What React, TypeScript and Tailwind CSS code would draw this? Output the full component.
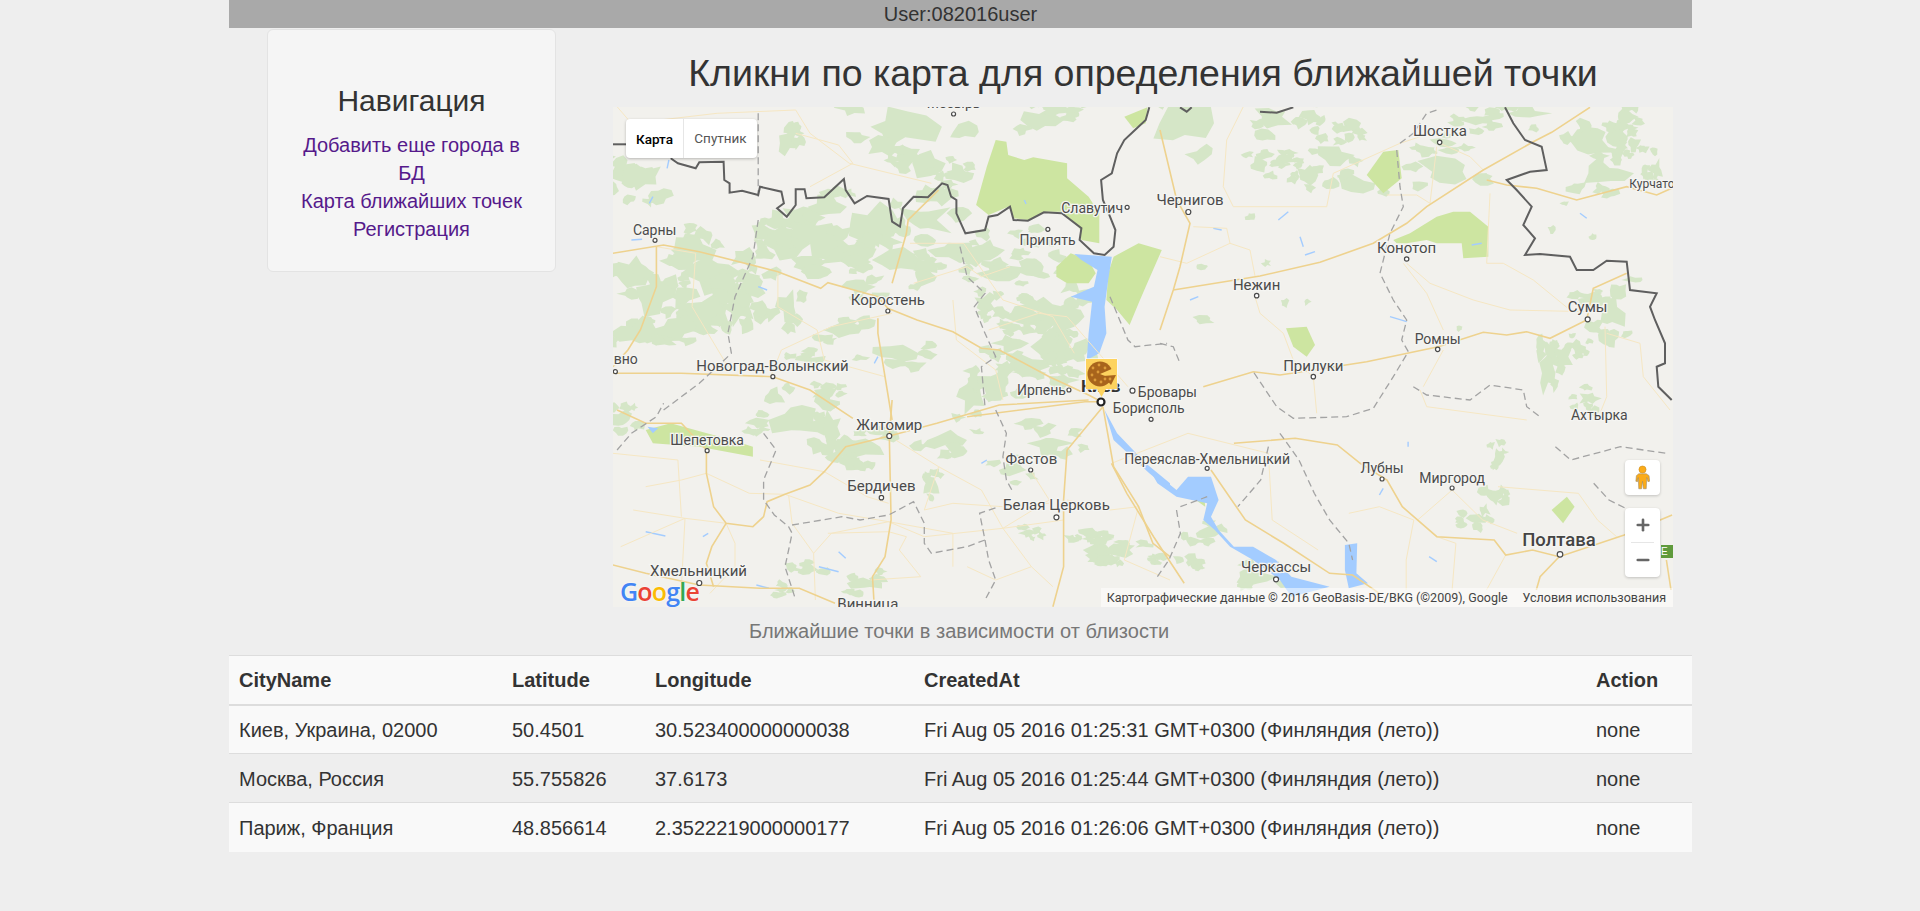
import { Plus, Minus } from "lucide-react";

type Crop = { sx: number; sy: number; ox: number; oy: number };

// map pieces were traced per region, each with its own scale to map coordinates
const A: Crop = { sx: 2.8, sy: 3, ox: -3, oy: -7 };
const B: Crop = { sx: 3, sy: 3, ox: 547, oy: -7 };
const C: Crop = { sx: 2.8, sy: 3, ox: -3, oy: 293 };
const D: Crop = { sx: 2.613, sy: 3, ox: 487, oy: 313 };

const pts = (c: Crop, p: number[]) => {
    const out: string[] = [];
    for (let i = 0; i < p.length; i += 2) {
        out.push(`${(p[i] / c.sx + c.ox).toFixed(1)},${(p[i + 1] / c.sy + c.oy).toFixed(1)}`);
    }
    return out.join(" ");
};

const rnd = (n: number) => {
    const v = Math.sin(n * 127.1 + 3.7) * 43758.5453;
    return v - Math.floor(v);
};

const blob = (c: Crop, x: number, y: number, rx: number, ry: number, seed: number) => {
    const p: number[] = [];
    const n = 10;
    for (let i = 0; i < n; i++) {
        const r = 0.4 + 0.8 * rnd(seed * 31 + i);
        const a = (i / n) * Math.PI * 2;
        p.push(x + Math.cos(a) * rx * r, y + Math.sin(a) * ry * r);
    }
    return pts(c, p);
};

// each patch gets a main shape and some broken off pieces around it
const forestShapes = (c: Crop, b: number[], seed: number) => {
    const [x, y, rx, ry] = b;
    const shapes = [blob(c, x, y, rx * 1.2, ry * 1.2, seed)];
    for (let k = 1; k <= 5; k++) {
        const a = rnd(seed + k * 7) * Math.PI * 2;
        const d = 1.1 + 0.9 * rnd(seed + k * 11);
        const s = 0.25 + 0.3 * rnd(seed + k * 13);
        shapes.push(blob(c, x + Math.cos(a) * rx * d, y + Math.sin(a) * ry * d, rx * s + 8, ry * s + 6, seed * 100 + k));
    }
    return shapes;
};

const forests: [Crop, number[][]][] = [
    [A, [[810, 80, 90, 55], [880, 190, 50, 35], [975, 220, 40, 25], [1210, 60, 50, 35], [1250, 30, 40, 20], [500, 130, 25, 30], [30, 210, 40, 30], [90, 230, 50, 40], [60, 520, 40, 50], [120, 590, 60, 50], [230, 450, 50, 40], [290, 520, 70, 60], [270, 640, 60, 50], [360, 620, 40, 50], [180, 690, 50, 30], [70, 700, 50, 40], [440, 400, 40, 30], [500, 430, 60, 40], [600, 410, 80, 50], [600, 320, 50, 30], [660, 470, 80, 30], [730, 370, 60, 50], [800, 480, 70, 40], [700, 560, 40, 25], [880, 360, 70, 50], [960, 450, 50, 30], [880, 530, 40, 25], [1050, 450, 50, 35], [1100, 520, 60, 25], [1180, 500, 50, 30], [1050, 610, 30, 25], [1150, 650, 50, 30], [1230, 640, 40, 40], [1290, 650, 50, 50], [1120, 730, 40, 25], [1240, 740, 50, 40], [1300, 760, 30, 30], [1080, 850, 60, 30], [1010, 890, 40, 40], [800, 760, 60, 25], [660, 690, 50, 20], [560, 780, 40, 15], [600, 880, 30, 15], [1170, 800, 50, 30], [1260, 840, 40, 20], [200, 590, 40, 30], [500, 620, 30, 40], [400, 560, 40, 30], [1190, 420, 35, 25]]],
    [C, [[520, 60, 60, 50], [620, 80, 30, 40], [420, 70, 30, 15], [930, 120, 60, 25], [700, 140, 60, 30], [670, 190, 30, 25], [900, 260, 20, 25], [1230, 130, 60, 35], [1130, 210, 40, 20], [1380, 450, 40, 25], [1340, 400, 30, 15], [720, 550, 40, 20], [550, 510, 30, 15], [30, 60, 30, 25], [1170, 400, 20, 15], [1410, 480, 15, 15], [480, 570, 20, 10]]],
    [B, [[60, 70, 90, 70], [340, 50, 50, 30], [455, 50, 30, 25], [580, 80, 30, 20], [525, 165, 50, 35], [440, 225, 25, 25], [590, 250, 50, 25], [300, 195, 35, 20], [380, 175, 30, 15], [850, 130, 40, 15], [960, 60, 50, 20], [860, 215, 80, 40], [1100, 40, 60, 25], [1300, 120, 50, 45], [1370, 110, 30, 25], [1340, 220, 60, 35], [1400, 50, 30, 20], [1490, 210, 20, 30], [1420, 135, 20, 20], [1210, 770, 25, 30], [1255, 740, 18, 20], [1160, 820, 25, 50], [1350, 640, 40, 50], [1290, 590, 35, 15], [1290, 895, 30, 20]]],
    [D, [[1040, 110, 15, 25], [1030, 230, 20, 30], [985, 295, 25, 20], [280, 340, 30, 20], [140, 420, 15, 8], [240, 420, 20, 15], [400, 470, 45, 25], [50, 390, 40, 18]]],
];

// single small patches, not broken up
const smallPatches: [Crop, number[][]][] = [
    [B, [[1215, 310, 15, 10], [1175, 390, 15, 15], [1300, 410, 15, 15], [270, 350, 15, 15], [130, 660, 40, 15], [440, 605, 15, 15], [375, 610, 15, 15], [130, 500, 20, 10], [320, 490, 15, 12], [1400, 700, 20, 15], [900, 685, 12, 10], [1420, 540, 30, 12]]],
];

const parks: [Crop, number[]][] = [
    [A, [1080, 120, 1110, 125, 1115, 165, 1160, 180, 1185, 172, 1280, 190, 1280, 235, 1340, 290, 1370, 340, 1370, 430, 1320, 420, 1315, 385, 1265, 335, 1215, 335, 1170, 360, 1130, 355, 1120, 318, 1060, 345, 1025, 315, 1055, 200]],
    [A, [1250, 500, 1290, 460, 1340, 480, 1360, 520, 1340, 550, 1280, 550, 1250, 530]],
    [A, [1410, 470, 1480, 430, 1545, 450, 1500, 560, 1480, 610, 1455, 675, 1420, 630, 1390, 600, 1395, 520]],
    [A, [1440, 50, 1505, 22, 1500, 70, 1465, 85]],
    [B, [620, 225, 670, 155, 715, 150, 725, 235, 670, 280]],
    [B, [700, 420, 750, 400, 830, 350, 880, 335, 930, 335, 985, 380, 985, 470, 910, 475, 905, 430, 830, 430, 800, 420, 740, 430, 710, 430]],
    [B, [378, 685, 440, 680, 465, 735, 440, 770, 400, 740]],
    [C, [100, 90, 170, 70, 340, 120, 400, 140, 400, 170, 250, 140, 120, 130]],
    [D, [240, 190, 270, 190, 275, 260, 250, 240]],
    [D, [1180, 270, 1220, 230, 1240, 260, 1210, 310]],
];

const water: [Crop, number[]][] = [
    [A, [1300, 462, 1405, 470, 1395, 540, 1385, 620, 1390, 700, 1370, 760, 1335, 780, 1340, 700, 1350, 605, 1290, 590, 1355, 560, 1365, 510, 1320, 480]],
    [C, [1385, 30, 1420, 100, 1500, 190, 1568, 250, 1568, 270, 1510, 220, 1410, 120]],
    [D, [125, 140, 200, 210, 230, 170, 290, 170, 310, 240, 290, 290, 310, 330, 350, 380, 400, 380, 460, 420, 500, 470, 600, 500, 500, 530, 470, 480, 400, 420, 340, 380, 300, 330, 270, 300, 280, 250, 200, 230, 150, 190]],
    [D, [640, 375, 672, 370, 670, 460, 700, 490, 650, 505, 640, 450]],
    [C, [105, 80, 135, 85, 120, 100]],
];

// short blue strokes for lakes and rivers
const ticks: [Crop, number[]][] = [
    [A, [60, 420, 90, 418]], [A, [120, 290, 110, 310]], [A, [165, 180, 160, 205]], [A, [415, 560, 440, 570]], [A, [750, 770, 740, 790]], [A, [1160, 300, 1165, 312]],
    [B, [355, 360, 385, 335]], [B, [420, 410, 430, 440]], [B, [435, 465, 465, 455]], [B, [160, 385, 185, 390]], [B, [90, 600, 115, 590]], [B, [690, 650, 740, 665]], [B, [935, 435, 965, 430]], [B, [1260, 340, 1280, 355]],
    [C, [100, 395, 155, 408]], [C, [640, 455, 660, 475]], [C, [585, 500, 640, 515]], [C, [260, 410, 275, 400]], [C, [410, 555, 445, 565]], [C, [1040, 190, 1055, 180]],
    [D, [740, 205, 730, 225]], [D, [860, 410, 880, 425]], [D, [805, 65, 805, 80]],
];

const roads: [Crop, number[]][] = [
    [A, [8, 460, 150, 435, 250, 455, 470, 515, 590, 565, 610, 548, 750, 590, 778, 625, 860, 660, 960, 695, 1040, 745, 1090, 750, 1230, 830, 1340, 885, 1376, 905]],
    [A, [790, 550, 830, 400, 835, 360, 920, 270]],
    [A, [130, 440, 130, 560, 85, 690, 50, 750, 8, 800]],
    [A, [8, 820, 200, 820, 456, 830, 560, 870, 680, 955]],
    [A, [750, 655, 750, 700, 790, 960]],
    [A, [1000, 950, 1330, 905, 1376, 905]],
    [C, [782, 108, 787, 360, 770, 470, 735, 530, 740, 620]],
    [C, [782, 108, 790, 0]],
    [C, [782, 108, 915, 70, 1090, 15, 1340, 0]],
    [C, [782, 108, 660, 140, 600, 215, 560, 255, 490, 283, 440, 305, 430, 350, 400, 380, 325, 370, 290, 320, 270, 220, 270, 155]],
    [C, [325, 370, 285, 440, 270, 490, 290, 560]],
    [C, [8, 495, 100, 520, 250, 555, 420, 565, 530, 565, 630, 610]],
    [C, [1380, 20, 1280, 150, 1270, 300, 1270, 500, 1240, 620]],
    [C, [1380, 20, 1410, 200, 1480, 320, 1520, 430, 1568, 470]],
    [C, [20, 30, 100, 70, 200, 70, 270, 150]],
    [B, [40, 570, 300, 528, 480, 487, 640, 430, 740, 370, 800, 320, 970, 210, 1120, 125, 1175, 97, 1290, 22]],
    [B, [0, 90, 50, 300, 90, 370, 60, 500, 40, 570, 0, 690]],
    [B, [980, 240, 1040, 255, 1130, 265, 1250, 300, 1400, 260, 1490, 285, 1535, 265]],
    [B, [130, 860, 280, 815, 360, 825, 460, 810, 620, 785, 835, 740, 970, 697, 1040, 705, 1100, 695, 1170, 715, 1280, 660, 1300, 565, 1400, 520]],
    [D, [290, 150, 380, 300, 480, 370, 600, 460, 660, 465, 730, 520]],
    [D, [350, 70, 510, 55, 620, 75, 680, 130, 750, 180, 790, 260, 880, 350, 1030, 360, 1060, 405, 1130, 390, 1200, 410, 1370, 345, 1495, 285]],
    [D, [1200, 410, 1150, 470, 1140, 510]],
    [D, [30, 130, 70, 220, 140, 350, 220, 490]],
    [D, [1480, 420, 1492, 510]],
];

const minorRoads: [Crop, number[]][] = [
    [A, [20, 20, 60, 70, 300, 40, 520, 30, 560, 100, 670, 190, 900, 250]],
    [A, [520, 100, 640, 135, 680, 190, 560, 260]],
    [A, [130, 440, 240, 460, 230, 620, 330, 800]],
    [A, [470, 515, 470, 620, 580, 690, 600, 780, 770, 830]],
    [A, [840, 430, 990, 430, 1100, 600, 1240, 650, 1300, 760]],
    [A, [790, 640, 620, 680, 480, 750, 450, 830]],
    [A, [960, 600, 970, 720, 1080, 810, 1100, 900]],
    [A, [1060, 690, 1200, 640, 1280, 650, 1450, 860]],
    [A, [850, 550, 1000, 500, 1040, 530, 1120, 500]],
    [C, [100, 260, 200, 240, 270, 220, 390, 280, 490, 283, 640, 340, 780, 365, 880, 410, 1100, 385, 1270, 360]],
    [C, [65, 330, 210, 355, 325, 370, 350, 430, 350, 500, 280, 580]],
    [C, [800, 120, 920, 200, 1040, 270, 1100, 385, 1180, 500, 1240, 560]],
    [C, [920, 200, 880, 330, 960, 310, 1100, 320, 1230, 310]],
    [C, [610, 400, 780, 395, 830, 410, 810, 450, 870, 530, 730, 540]],
    [C, [570, 460, 620, 400, 780, 365, 960, 400, 960, 500]],
    [C, [500, 285, 510, 370, 570, 460, 575, 600]],
    [C, [1180, 215, 1230, 300, 1100, 385]],
    [C, [1280, 300, 1400, 330, 1480, 320, 1440, 480, 1568, 540]],
    [C, [30, 440, 210, 355, 200, 560]],
    [C, [8, 160, 190, 180, 200, 350]],
    [C, [420, 180, 600, 215, 720, 290, 780, 310]],
    [C, [1000, 500, 1080, 540, 1180, 500]],
    [B, [250, 20, 200, 120, 190, 260, 220, 320, 500, 320, 520, 220, 720, 130, 780, 110]],
    [B, [680, 285, 770, 285, 810, 310, 830, 140]],
    [B, [840, 130, 930, 170, 970, 210]],
    [B, [100, 380, 200, 385, 210, 430, 270, 450, 285, 528]],
    [B, [0, 470, 80, 490, 210, 430]],
    [B, [285, 590, 300, 640, 370, 700, 400, 780, 460, 830, 470, 940]],
    [B, [730, 490, 800, 580, 850, 690]],
    [B, [740, 490, 810, 550, 940, 600, 1050, 630, 1283, 635]],
    [B, [990, 280, 980, 490, 1030, 490, 1120, 540, 1230, 630]],
    [B, [1335, 680, 1340, 890, 1320, 940]],
    [B, [1340, 700, 1440, 730, 1450, 830, 1530, 930]],
    [B, [780, 870, 800, 920, 1100, 960]],
    [B, [850, 750, 790, 860]],
    [D, [30, 130, 230, 40, 440, 100, 450, 300, 570, 390]],
    [D, [650, 280, 730, 260, 820, 300, 800, 420, 800, 510]],
    [D, [830, 300, 920, 210, 1000, 300, 1090, 340]],
    [D, [880, 350, 930, 370, 920, 510]],
    [D, [1060, 405, 1010, 510]],
    [D, [1040, 200, 1250, 220, 1300, 300, 1350, 350]],
];

const districts: [Crop, number[]][] = [
    [A, [415, 40, 415, 290]],
    [A, [415, 360, 400, 470, 350, 590, 330, 700, 340, 760, 250, 850, 150, 930]],
    [A, [980, 440, 1000, 530, 1050, 580, 1020, 620, 1050, 700, 1080, 770, 1040, 800, 1050, 920]],
    [A, [1400, 590, 1450, 720, 1470, 740, 1560, 730]],
    [C, [20, 150, 60, 100, 130, 50, 150, 10]],
    [C, [430, 100, 465, 150, 430, 240, 430, 300, 460, 345, 500, 380, 510, 400, 500, 450, 490, 500, 520, 600]],
    [C, [510, 375, 650, 350, 700, 360, 780, 345, 850, 305, 880, 370, 880, 430, 900, 460, 1000, 440, 1050, 420, 1035, 340, 1090, 320]],
    [C, [1050, 420, 1060, 480, 1080, 540, 1050, 600]],
    [C, [1080, 30, 1110, 100, 1100, 170, 1110, 240, 1130, 280]],
    [B, [710, 150, 720, 260, 730, 320, 690, 400, 660, 520, 700, 600, 740, 660, 725, 720, 745, 755, 700, 830, 640, 925, 560, 950, 400, 955, 350, 920, 310, 860, 280, 815]],
    [B, [760, 860, 800, 885, 930, 900, 990, 855, 1090, 870, 1100, 920, 1140, 950]],
    [B, [720, 130, 760, 100, 800, 40, 830, 30]],
    [B, [0, 730, 40, 740, 60, 790]],
    [D, [470, 40, 520, 120, 560, 220, 600, 300, 650, 370, 660, 420]],
    [D, [440, 80, 420, 180, 360, 260]],
    [D, [210, 260, 280, 230]],
    [D, [200, 270, 210, 340, 180, 420, 150, 470]],
    [D, [1190, 80, 1230, 120, 1360, 80, 1480, 100]],
    [D, [1290, 190, 1330, 240, 1400, 280]],
];

const borders: [Crop, number[]][] = [
    [A, [8, 133, 45, 133]],
    [A, [170, 175, 190, 190, 240, 205, 250, 187, 318, 185, 320, 240, 335, 250, 335, 278, 370, 272, 415, 285, 420, 260, 480, 275, 487, 310, 468, 325, 495, 350, 520, 315, 520, 268, 545, 268, 550, 295, 600, 292, 655, 237, 660, 270, 685, 310, 720, 288, 780, 297, 790, 365, 812, 380, 820, 325, 850, 290, 890, 292, 930, 250, 945, 255, 955, 290, 970, 300, 970, 340, 995, 400, 1050, 390, 1060, 350, 1085, 345, 1120, 320, 1130, 360, 1170, 362, 1215, 337, 1265, 340, 1320, 385, 1315, 420, 1355, 460, 1385, 465, 1410, 440, 1415, 390, 1400, 350, 1380, 300, 1375, 240, 1405, 220, 1420, 160, 1440, 120, 1470, 90, 1500, 60, 1510, 22]],
    [B, [300, 35, 350, 38, 400, 22]],
    [B, [60, 22, 80, 35, 95, 22]],
    [B, [1035, 22, 1060, 70, 1095, 120, 1145, 140, 1160, 210, 1110, 215, 1040, 240, 1070, 270, 1115, 320, 1090, 375, 1125, 415, 1095, 465, 1140, 462, 1230, 470, 1250, 510, 1300, 510, 1340, 482, 1400, 485, 1410, 570, 1490, 580, 1470, 620, 1485, 660, 1515, 730, 1515, 790, 1490, 800, 1495, 860, 1535, 900]],
];

const labels: [Crop, number, number, string, string][] = [
    [A, 125, 390, "Сарны", "s"],
    [A, 78, 778, "вно", "e"],
    [A, 455, 797, "Новоград-Волынский", "m"],
    [A, 778, 600, "Коростень", "m"],
    [A, 1225, 420, "Припять", "s"],
    [A, 1350, 323, "Славутич", "s"],
    [A, 1208, 870, "Ирпень", "s"],
    [A, 1478, 875, "Бровары", "b"],
    [A, 1408, 925, "Борисполь", "b"],
    [A, 962, 10, "Мозырь", "s"],
    [B, 90, 300, "Чернигов", "m"],
    [B, 840, 93, "Шостка", "m"],
    [B, 1408, 250, "Курчатов", "l"],
    [B, 740, 443, "Конотоп", "m"],
    [B, 290, 553, "Нежин", "m"],
    [B, 1283, 621, "Сумы", "m"],
    [B, 833, 716, "Ромны", "s"],
    [B, 460, 797, "Прилуки", "m"],
    [B, 1318, 945, "Ахтырка", "s"],
    [C, 782, 73, "Житомир", "m"],
    [C, 272, 120, "Шепетовка", "s"],
    [C, 760, 258, "Бердичев", "m"],
    [C, 1180, 176, "Фастов", "m"],
    [C, 1250, 315, "Белая Церковь", "m"],
    [C, 248, 511, "Хмельницкий", "m"],
    [C, 722, 610, "Винница", "m"],
    [D, 280, 116, "Переяслав-Хмельницкий", "s"],
    [D, 737, 143, "Лубны", "s"],
    [D, 920, 173, "Миргород", "s"],
    [D, 460, 441, "Черкассы", "m"],
];

const dots: [Crop, number, number, number][] = [
    [A, 126, 421, 2], [A, 15, 815, 2], [A, 456, 830, 2], [A, 778, 633, 2], [A, 1226, 388, 2], [A, 1448, 322, 2], [A, 962, 42, 2], [A, 1285, 870, 2], [A, 1463, 872, 2.5],
    [B, 85, 336, 2.5], [B, 839, 127, 2.2], [B, 740, 477, 2.2], [B, 290, 587, 2.2], [B, 1283, 658, 2.5], [B, 833, 748, 2.2], [B, 460, 830, 2.2],
    [C, 782, 108, 2.5], [C, 272, 152, 2], [C, 760, 293, 2.2], [C, 1178, 210, 2], [C, 1250, 352, 2.5], [C, 250, 549, 2.5], [C, 1515, 58, 2],
    [D, 280, 145, 2], [D, 737, 177, 2], [D, 920, 204, 2], [D, 460, 478, 2.5], [D, 1202, 403, 2.8],
];

const toMap = (c: Crop, x: number, y: number) => ({ x: x / c.sx + c.ox, y: y / c.sy + c.oy });

function MapDrawing() {
    return (
        <svg width="1060" height="500" viewBox="0 0 1060 500" className="block" fontFamily="Roboto, sans-serif">
            <rect width="1060" height="500" fill="#f2f1ed" />
            {forests.map(([c, list], i) =>
                list.map((b, j) =>
                    forestShapes(c, b, i * 50 + j + 1).map((shape, k) => (
                        <polygon key={`${i}-${j}-${k}`} points={shape} fill="#d5e6c7" />
                    ))
                )
            )}
            {smallPatches.map(([c, list], i) =>
                list.map(([x, y, rx, ry], j) => <polygon key={`${i}-${j}`} points={blob(c, x, y, rx, ry, 900 + j)} fill="#d5e6c7" />)
            )}
            {parks.map(([c, p], i) => <polygon key={i} points={pts(c, p)} fill="#cde5a1" />)}
            {water.map(([c, p], i) => <polygon key={i} points={pts(c, p)} fill="#a3ccff" />)}
            {ticks.map(([c, p], i) => <polyline key={i} points={pts(c, p)} fill="none" stroke="#a3ccff" strokeWidth="1.4" />)}
            {minorRoads.map(([c, p], i) => <polyline key={i} points={pts(c, p)} fill="none" stroke="#f6e7c3" strokeWidth="1" />)}
            {roads.map(([c, p], i) => <polyline key={i} points={pts(c, p)} fill="none" stroke="#eed28e" strokeWidth="1.6" />)}
            {districts.map(([c, p], i) => <polyline key={i} points={pts(c, p)} fill="none" stroke="#a3a3a3" strokeWidth="1.3" strokeDasharray="7 4" />)}
            {borders.map(([c, p], i) => <polyline key={i} points={pts(c, p)} fill="none" stroke="#5f5f5f" strokeWidth="2" />)}

            {dots.map(([c, x, y, r], i) => {
                const p = toMap(c, x, y);
                return <circle key={i} cx={p.x} cy={p.y} r={r} fill="#fff" stroke="#4a4a4a" strokeWidth="1.2" />;
            })}

            {labels.map(([c, x, y, text, kind], i) => {
                const p = toMap(c, x, y);
                const size = kind === "m" ? 15 : kind === "l" ? 12 : 14;
                const anchor = kind === "b" || kind === "l" ? "start" : kind === "e" ? "end" : "middle";
                return (
                    <text key={i} x={p.x} y={p.y + size * 0.36} fontSize={size} textAnchor={anchor} fill="#4b4b4b" stroke="#f5f5f2" strokeWidth="2.5" paintOrder="stroke">
                        {text}
                    </text>
                );
            })}
            <text x="946" y="439" fontSize="18.500" textAnchor="middle" fontWeight="500" fill="#444" stroke="#f5f5f2" strokeWidth="2.5" paintOrder="stroke">Полтава</text>
            <text x="468" y="285" fontSize="17" fontWeight="700" fill="#333" stroke="#f5f5f2" strokeWidth="2.5" paintOrder="stroke">Киев</text>
            <circle cx="488" cy="295" r="3.5" fill="#fff" stroke="#222" strokeWidth="2.2" />

            <g>
                <rect x="472" y="251" width="33" height="32" rx="2" fill="#fff" fillOpacity="0.6" />
                <path d="M473 252h31v30h-11l-4.500 8-4.500-8h-11z" fill="#fdd35f" />
                <circle cx="487" cy="267" r="12.500" fill="#a8641c" />
                <path d="M487 267l14-6 1 12z" fill="#fdd35f" />
                <path d="M490 269l13-1-5 10z" fill="#a8641c" />
                {[[480, 261], [486, 258], [492, 261], [479, 268], [485, 265], [482, 273], [488, 275], [492, 272], [497, 272]].map(([x, y], i) => (
                    <circle key={i} cx={x} cy={y} r="1.400" fill="#dc9b3a" />
                ))}
            </g>
        </svg>
    );
}

const rows = [
    { city: "Киев, Украина, 02000", lat: "50.4501", lng: "30.523400000000038", created: "Fri Aug 05 2016 01:25:31 GMT+0300 (Финляндия (лето))", action: "none" },
    { city: "Москва, Россия", lat: "55.755826", lng: "37.6173", created: "Fri Aug 05 2016 01:25:44 GMT+0300 (Финляндия (лето))", action: "none" },
    { city: "Париж, Франция", lat: "48.856614", lng: "2.3522219000000177", created: "Fri Aug 05 2016 01:26:06 GMT+0300 (Финляндия (лето))", action: "none" },
];

export default function App() {
    return (
        <div className="min-h-[911px] bg-[#eeeeee] text-[#333333] text-[20px] leading-[28px] font-['Liberation_Sans',Arial,sans-serif]">
            <div className="ml-[229px] w-[1463px]">
                <div className="h-[28px] bg-[#a9a9a9] text-center leading-[28px]">User:082016user</div>

                <div className="flex">
                    <aside className="ml-[38px] mt-px h-[243px] w-[289px] rounded-md border border-[#e3e3e3] bg-[#f5f5f5] px-[25px] pt-[54px] text-center">
                        <h2 className="text-[30px] leading-[33px]">Навигация</h2>
                        <nav className="mt-[14px] text-[#551a8b]">
                            <a className="block" href="#">Добавить еще города в БД</a>
                            <a className="block" href="#">Карта ближайших точек</a>
                            <a className="block" href="#">Регистрация</a>
                        </nav>
                    </aside>

                    <main className="ml-[57px] w-[1060px]">
                        <h1 className="h-[79px] pt-[25px] text-center text-[37.500px] leading-[40px]">Кликни по карта для определения ближайшей точки</h1>
                        <div className="relative h-[500px] overflow-hidden">
                            <MapDrawing />

                            <div className="absolute left-[13px] top-[12px] flex h-[39px] w-[131px] items-center rounded-sm bg-white text-[13.500px] shadow-[0_1px_3px_rgba(0,0,0,0.25)] font-['Roboto',sans-serif]">
                                <span className="w-[57px] text-center font-medium text-black">Карта</span>
                                <span className="flex-1 border-l border-[#e6e6e6] text-center leading-[39px] text-[#565656]">Спутник</span>
                            </div>

                            <div className="absolute left-[1012px] top-[353px] flex h-[35px] w-[35px] items-center justify-center rounded-sm bg-white shadow-[0_1px_3px_rgba(0,0,0,0.2)]">
                                <svg width="15" height="25" viewBox="0 0 16 26">
                                    <circle cx="8" cy="4.500" r="3.800" fill="#fbab18" stroke="#c98a1c" strokeWidth="0.600" />
                                    <path d="M4 9h8l3 2 .6 6-1.800.4L12.500 13l-.5 12H9l-1-8-1 8H4L3.500 13l-.8 4.400-1.800-.4.600-6z" fill="#fbab18" stroke="#9a8a6a" strokeWidth="0.600" />
                                </svg>
                            </div>

                            <div className="absolute left-[1012px] top-[401px] flex h-[69px] w-[35px] flex-col items-center rounded-sm bg-white text-[#666666] shadow-[0_1px_3px_rgba(0,0,0,0.2)]">
                                <div className="flex h-[34px] items-center justify-center"><Plus size={18} strokeWidth={3.5} /></div>
                                <div className="h-px w-[23px] bg-[#e6e6e6]"></div>
                                <div className="flex h-[34px] items-center justify-center"><Minus size={18} strokeWidth={3.5} /></div>
                            </div>

                            <div className="absolute left-[1048px] top-[438px] h-[13px] w-[12px] bg-[#5f9a3c] text-[10px] leading-[13px] text-white">E</div>

                            <div className="absolute bottom-[3px] left-[7px] text-[25px] font-semibold leading-[26px] tracking-[-0.8px] [text-shadow:0_0_2px_white] font-['Open_Sans',sans-serif]">
                                <span className="text-[#4285f4]">G</span>
                                <span className="text-[#ea4335]">o</span>
                                <span className="text-[#fbbc05]">o</span>
                                <span className="text-[#4285f4]">g</span>
                                <span className="text-[#34a853]">l</span>
                                <span className="text-[#ea4335]">e</span>
                            </div>

                            <div className="absolute bottom-0 right-0 flex h-[19px] items-center gap-[15px] bg-white/50 pl-[6px] pr-[7px] text-[12.500px] leading-[19px] text-[#444444] font-['Roboto',sans-serif]">
                                <span>Картографические данные © 2016 GeoBasis-DE/BKG (©2009), Google</span>
                                <span>Условия использования</span>
                            </div>
                        </div>
                    </main>
                </div>

                <p className="ml-[520px] h-[48px] pt-[10px] text-[#777777]">Ближайшие точки в зависимости от близости</p>

                <table className="w-[1463px] table-fixed border-collapse">
                    <colgroup>
                        <col className="w-[273px]" />
                        <col className="w-[143px]" />
                        <col className="w-[269px]" />
                        <col className="w-[672px]" />
                        <col className="w-[106px]" />
                    </colgroup>
                    <thead>
                        <tr className="border-t border-[#dddddd] border-b-2 bg-[#f9f9f9] text-left">
                            <th className="h-[49px] px-[10px] font-bold">CityName</th>
                            <th className="px-[10px] font-bold">Latitude</th>
                            <th className="px-[10px] font-bold">Longitude</th>
                            <th className="px-[10px] font-bold">CreatedAt</th>
                            <th className="px-[10px] font-bold">Action</th>
                        </tr>
                    </thead>
                    <tbody>
                        {rows.map((row, i) => (
                            <tr key={row.city} className={`border-t border-[#dddddd] first:border-t-0 ${i % 2 === 0 ? "bg-[#f9f9f9]" : "bg-[#eeeeee]"}`}>
                                <td className="h-[49px] px-[10px] pt-[2px]">{row.city}</td>
                                <td className="px-[10px] pt-[2px]">{row.lat}</td>
                                <td className="px-[10px] pt-[2px]">{row.lng}</td>
                                <td className="px-[10px] pt-[2px]">{row.created}</td>
                                <td className="px-[10px] pt-[2px]">{row.action}</td>
                            </tr>
                        ))}
                    </tbody>
                </table>
            </div>
        </div>
    );
}
